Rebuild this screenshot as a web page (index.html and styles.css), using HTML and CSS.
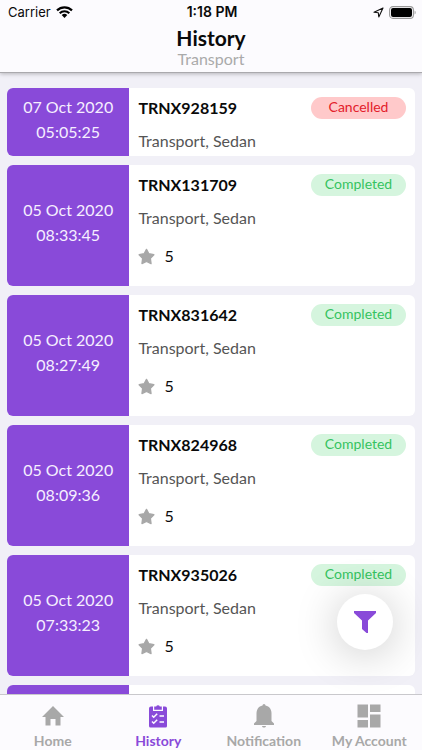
FILE: index.html
```html
<!DOCTYPE html>
<html lang="en">
<head>
<meta charset="utf-8">
<meta name="viewport" content="width=device-width, initial-scale=1">
<title>History</title>
<link rel="stylesheet" href="styles.css">
</head>
<body>
<div class="app">
  <header class="header">
    <div class="status">
      <div class="status-side">
        <span>Carrier</span>
        <svg class="wifi" viewBox="0 0 17 12" aria-hidden="true"><g fill="none" stroke="#000" stroke-width="2.2"><path d="M1 4.4a10.8 10.8 0 0 1 15 0"/><path d="M3.7 7.2a6.9 6.9 0 0 1 9.6 0"/></g><path d="M5.7 9.1a4 4 0 0 1 5.6 0L8.500 12z"/></svg>
      </div>
      <span class="clock">1:18 PM</span>
      <div class="status-side status-end">
        <svg class="locate" viewBox="0 0 11 11" aria-hidden="true"><path d="M10 1 1 5.200l4.300.500.500 4.300z" fill="none" stroke="#111" stroke-width="1.1" stroke-linejoin="round"/></svg>
        <svg class="battery" viewBox="0 0 27 13" aria-hidden="true"><rect x=".6" y=".6" width="23.800" height="11.800" rx="3.400" fill="none" stroke="#999" stroke-width="1.100"/><rect x="2" y="2" width="21" height="9" rx="2"/><path d="M25.600 4.500v4c1.400-.5 1.400-3.500 0-4z" fill="#999"/></svg>
      </div>
    </div>
    <h1>History</h1>
    <p class="subtitle">Transport</p>
  </header>

  <main class="list">
    <article class="card">
      <div class="when"><span>07 Oct 2020</span><span>05:05:25</span></div>
      <div class="info">
        <div class="top"><h2>TRNX928159</h2><span class="badge cancelled">Cancelled</span></div>
        <p class="kind">Transport, Sedan</p>
      </div>
    </article>
    <article class="card">
      <div class="when"><span>05 Oct 2020</span><span>08:33:45</span></div>
      <div class="info">
        <div class="top"><h2>TRNX131709</h2><span class="badge completed">Completed</span></div>
        <p class="kind">Transport, Sedan</p>
        <div class="rating"><svg viewBox="0 0 18 18" aria-hidden="true"><use href="#star"/></svg><span>5</span></div>
      </div>
    </article>
    <article class="card">
      <div class="when"><span>05 Oct 2020</span><span>08:27:49</span></div>
      <div class="info">
        <div class="top"><h2>TRNX831642</h2><span class="badge completed">Completed</span></div>
        <p class="kind">Transport, Sedan</p>
        <div class="rating"><svg viewBox="0 0 18 18" aria-hidden="true"><use href="#star"/></svg><span>5</span></div>
      </div>
    </article>
    <article class="card">
      <div class="when"><span>05 Oct 2020</span><span>08:09:36</span></div>
      <div class="info">
        <div class="top"><h2>TRNX824968</h2><span class="badge completed">Completed</span></div>
        <p class="kind">Transport, Sedan</p>
        <div class="rating"><svg viewBox="0 0 18 18" aria-hidden="true"><use href="#star"/></svg><span>5</span></div>
      </div>
    </article>
    <article class="card">
      <div class="when"><span>05 Oct 2020</span><span>07:33:23</span></div>
      <div class="info">
        <div class="top"><h2>TRNX935026</h2><span class="badge completed">Completed</span></div>
        <p class="kind">Transport, Sedan</p>
        <div class="rating"><svg viewBox="0 0 18 18" aria-hidden="true"><use href="#star"/></svg><span>5</span></div>
      </div>
    </article>
    <article class="card next">
      <div class="when"></div>
      <div class="info"></div>
    </article>
    <button class="filter" type="button" aria-label="Filter">
      <svg viewBox="0 0 24 24" aria-hidden="true"><path d="M1 1h22v2l-8 7.500V23h-1.500L9 19v-8.500L1 3z"/></svg>
    </button>
  </main>

  <nav class="tabs">
    <a href="#home"><svg viewBox="0 0 24 24" aria-hidden="true"><path d="M12 2 1 13h3.500v8.500h5V15h5v6.500h5V13H23z"/></svg>Home</a>
    <a href="#history" class="active" aria-current="page"><svg viewBox="0 0 24 24" aria-hidden="true"><path d="M5 2.500h2V7h10V2.500h2a2 2 0 0 1 2 2V22a1.500 1.500 0 0 1-1.500 1.500h-15A1.500 1.500 0 0 1 3 22V4.500a2 2 0 0 1 2-2z"/><path d="M8.200 5.700V2.500h2a1.900 1.900 0 0 1 3.600 0h2v3.200z"/><path d="m6 11.500 1.700 1.700 3.500-3.500M6 17.500l1.700 1.700 3.500-3.500M13.500 12H18M13.500 18H18" fill="none" stroke="#fcfbfe" stroke-width="1.500"/></svg>History</a>
    <a href="#notification"><svg viewBox="0 0 24 24" aria-hidden="true"><path d="M10.500 1.500a1.500 1.500 0 0 1 3 0c4 .8 6 4 6 8V17l2.500 2.500V21H2v-1.500L4.500 17V9.500c0-4 2-7.200 6-8zM10 22h4c-.3 2-3.700 2-4 0z"/></svg>Notification</a>
    <a href="#account"><svg viewBox="0 0 24 24" aria-hidden="true"><path d="M.5.500h10.500v13H.5zM13 .5h10.500v7.500H13zM.5 16h10.500v7.500H.5zM13 10.500h10.500v13H13z"/></svg>My Account</a>
  </nav>
</div>
<svg class="defs" aria-hidden="true"><symbol id="star" viewBox="0 0 18 18"><path d="m9 1.500 2.500 4.600 5.300 1-3.700 3.900.7 5.500L9 14.300l-4.800 2.200.7-5.500-3.700-3.900 5.300-1z" stroke="#a8a8a8" stroke-width="1.400" stroke-linejoin="round"/></symbol></svg>
</body>
</html>
```

FILE: styles.css
```css
* { box-sizing: border-box; }

body {
  margin: 0;
  font-family: Lato, "Liberation Sans", sans-serif;
  font-size: 16px;
  line-height: 24px;
  color: #0a0a0a;
  background: #f1f0f7;
}

h1, h2, p { margin: 0; }

.app {
  display: flex;
  flex-direction: column;
  height: 100vh;
}

.header {
  flex: none;
  padding-bottom: 6px;
  text-align: center;
  background: #fcfbfe;
  border-bottom: 1px solid #aaa9ad;
  box-shadow: 0 1px 4px rgba(0, 0, 0, 0.25);
  z-index: 1;
}

.status {
  display: flex;
  align-items: center;
  height: 24px;
  padding: 0 6px 0 8px;
  font-family: Inter, "Liberation Sans", sans-serif;
  font-size: 13px;
}

.status-side {
  display: flex;
  flex: 1;
  align-items: center;
  gap: 5px;
}

.status-end { justify-content: flex-end; }
.clock { font-size: 14px; font-weight: 600; }
.wifi { width: 17px; height: 12px; }
.locate { width: 11px; height: 11px; }
.battery { width: 27px; height: 13px; }

h1 {
  font-size: 21px;
  line-height: 28px;
  font-weight: 700;
}

.subtitle {
  font-size: 16px;
  line-height: 14px;
  color: #aaa;
}

.list {
  position: relative;
  flex: 1;
  min-height: 0;
  overflow: hidden;
  padding: 15px 7px 0;
}

.card {
  display: flex;
  margin-bottom: 9px;
  overflow: hidden;
  background: #fff;
  border-radius: 6px;
}

.next { height: 121px; }

.when {
  display: flex;
  flex: 0 0 30%;
  flex-direction: column;
  align-items: center;
  justify-content: center;
  padding-bottom: 7px;
  line-height: 25px;
  color: #f6efff;
  background: #894ad9;
}

.info {
  flex: 1;
  padding: 8px 9px 3px;
}

.top {
  display: flex;
  align-items: center;
  justify-content: space-between;
  margin-bottom: 9px;
}

h2 {
  font-size: 16px;
  font-weight: 700;
}

.badge {
  width: 95px;
  height: 22px;
  font-size: 14px;
  line-height: 20px;
  text-align: center;
  border-radius: 11px;
}

.cancelled { color: #e3202b; background: #ffc9ca; }
.completed { color: #36c360; background: #d5f5de; }
.kind { color: #555; }

.rating {
  display: flex;
  align-items: center;
  gap: 9px;
  margin: 14px 0 15px;
}

.rating svg {
  width: 17px;
  height: 17px;
  fill: #a8a8a8;
}

.filter {
  position: absolute;
  right: 29px;
  bottom: 44px;
  display: grid;
  place-items: center;
  width: 56px;
  height: 56px;
  padding: 0;
  border: 0;
  border-radius: 50%;
  background: #fff;
  box-shadow: 0 4px 44px rgba(0, 0, 0, 0.22);
}

.filter svg {
  width: 24px;
  height: 24px;
  fill: #894ad9;
}

.tabs {
  display: grid;
  flex: none;
  grid-template-columns: repeat(4, 1fr);
  height: 56px;
  background: #fcfbfe;
  border-top: 1px solid #c9c8cc;
}

.tabs a {
  display: flex;
  flex-direction: column;
  align-items: center;
  gap: 4px;
  padding-top: 9px;
  font-size: 14px;
  line-height: 18px;
  font-weight: 700;
  color: #a8a8a8;
  text-decoration: none;
}

.tabs svg {
  width: 24px;
  height: 24px;
  fill: currentColor;
}

.tabs .active { color: #894ad9; }

.defs {
  position: absolute;
  width: 0;
  height: 0;
}
```
